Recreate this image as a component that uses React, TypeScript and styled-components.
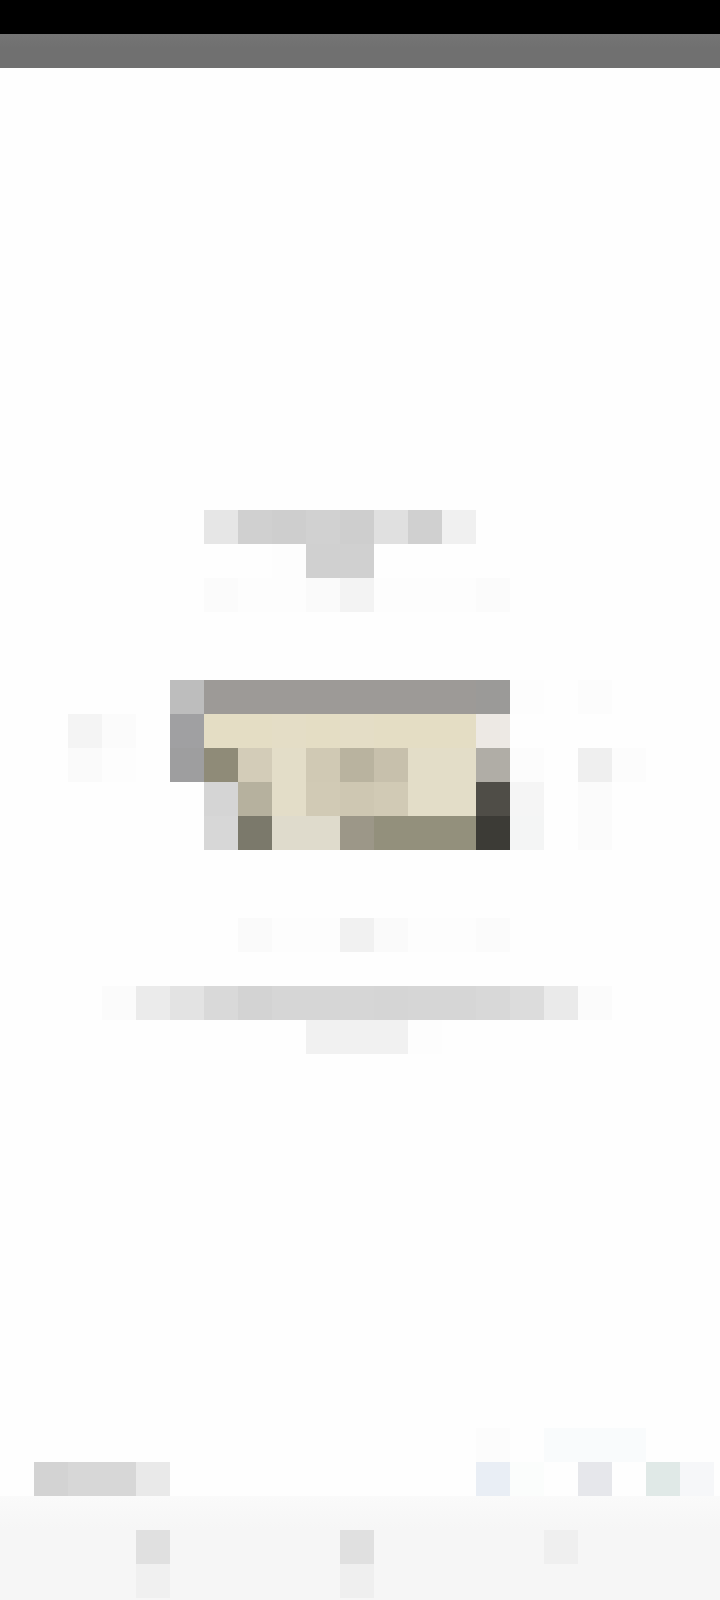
import React from 'react';
import styled, { createGlobalStyle } from 'styled-components';

const UNIT = 34;

type Tone = string | null;

const GlobalStyle = createGlobalStyle`
  html, body {
    margin: 0;
    padding: 0;
    background: #fff;
    font-family: "Roboto", "Liberation Sans", sans-serif;
  }
`;

const Screen = styled.div`
  width: 720px;
  height: 1600px;
  display: flex;
  flex-direction: column;
  overflow: hidden;
  background: #fefefe;
`;

const StatusBar = styled.div`
  height: ${UNIT}px;
  flex: none;
  background: #000;
`;

const AppBar = styled.header`
  height: ${UNIT}px;
  flex: none;
  background: linear-gradient(180deg, #757575 0%, #707070 40%, #707070 100%);
`;

const Main = styled.main`
  flex: 1;
  display: flex;
  flex-direction: column;
  padding-top: ${UNIT * 13}px;
`;

const Block = styled.section<{ $gap?: number }>`
  display: flex;
  flex-direction: column;
  margin-top: ${(p) => (p.$gap ?? 0) * UNIT}px;
`;

const Row = styled.div<{ $indent?: number }>`
  display: flex;
  height: ${UNIT}px;
  padding-left: ${(p) => (p.$indent ?? 0) * UNIT}px;
`;

const Tile = styled.span<{ $tone: Tone }>`
  flex: none;
  width: ${UNIT}px;
  height: ${UNIT}px;
  background: ${(p) => p.$tone ?? 'transparent'};
`;

const Figure = styled.div`
  display: flex;
  align-items: flex-start;
`;

const Noise = styled.div<{ $indent?: number }>`
  display: flex;
  flex-direction: column;
  flex: none;
  padding-left: ${(p) => (p.$indent ?? 0) * UNIT}px;
`;

const Picture = styled.svg`
  display: block;
  flex: none;
  width: ${UNIT * 10}px;
  height: ${UNIT * 5}px;
`;

const FooterBand = styled.div`
  margin-top: auto;
  display: flex;
  flex-direction: column;
`;

const Nav = styled.nav`
  height: 104px;
  flex: none;
  box-sizing: border-box;
  padding-top: ${UNIT}px;
  background: linear-gradient(180deg, #fafafa 0%, #f6f6f6 32%, #f6f6f6 100%);
`;

const Tiles = ({ tones, indent }: { tones: Tone[]; indent?: number }) => (
  <Row $indent={indent}>
    {tones.map((tone, i) => (
      <Tile key={i} $tone={tone} />
    ))}
  </Row>
);

const illustration: Tone[][] = [
  ['#bdbdbd', '#9d9a97', '#9d9a97', '#9d9a97', '#9d9a97', '#9d9a97', '#9d9a97', '#9d9a97', '#9d9a97', '#9b9a98'],
  ['#a0a0a2', '#e4ddc4', '#e4ddc4', '#e4ddc6', '#e4ddc4', '#e4ddc6', '#e4ddc4', '#e4ddc4', '#e4ddc4', '#ede9e4'],
  ['#9e9e9f', '#8f8b78', '#d3ccb8', '#e3ddc8', '#d0c9b4', '#b9b39f', '#c7c0ac', '#e3ddc8', '#e3ddc8', '#b0ada6'],
  [null, '#d5d5d5', '#b6b19e', '#e3ddc8', '#d1cab5', '#cec7b2', '#d1cab5', '#e3ddc8', '#e3ddc8', '#4f4d47'],
  [null, '#d7d7d7', '#7b796b', '#dfdbcc', '#dfdbcc', '#9c9788', '#93907c', '#93907c', '#93907c', '#3c3b36'],
];

const App = () => {
  return (
    <Screen>
      <GlobalStyle />
      <StatusBar />
      <AppBar />
      <Main>
        <Block>
          <Tiles indent={6} tones={['#e6e6e6', '#d0d0d0', '#cecece', '#d1d1d1', '#cecece', '#e0e0e0', '#d0d0d0', '#f0f0f0']} />
          <Tiles indent={8} tones={['#fdfdfd', '#d0d0d0', '#d0d0d0']} />
          <Tiles indent={6} tones={['#fbfbfb', '#fdfdfd', '#fdfdfd', '#fafafa', '#f3f3f3', '#fdfdfd', '#fdfdfd', '#fdfdfd', '#fbfbfb']} />
        </Block>

        <Block $gap={2}>
          <Figure>
            <Noise $indent={2}>
              <Tiles tones={['#fefefe', null, null]} />
              <Tiles tones={['#f4f4f4', '#fbfbfb', null]} />
              <Tiles tones={['#fafafa', '#fdfdfd', null]} />
            </Noise>
            <Picture viewBox="0 0 10 5" shapeRendering="crispEdges">
              {illustration.map((cells, y) =>
                cells.map((fill, x) => (fill ? <rect key={`${x}-${y}`} x={x} y={y} width="1" height="1" fill={fill} /> : null)),
              )}
            </Picture>
            <Noise>
              <Tiles tones={['#fdfdfd', null, '#fcfcfc']} />
              <Tiles tones={['#fefefe', null, '#fefefe']} />
              <Tiles tones={['#fcfcfc', null, '#efefef', '#fcfcfc']} />
              <Tiles tones={['#f5f5f5', null, '#fbfbfb', '#fefefe']} />
              <Tiles tones={['#f4f5f5', null, '#fbfbfb']} />
            </Noise>
          </Figure>
        </Block>

        <Block $gap={2}>
          <Tiles indent={7} tones={['#fafafa', '#fdfdfd', '#fdfdfd', '#f1f1f1', '#fafafa', '#fdfdfd', '#fdfdfd', '#fbfbfb']} />
        </Block>

        <Block $gap={1}>
          <Tiles
            indent={3}
            tones={['#fbfbfb', '#ebebeb', '#e3e3e3', '#d9d9d9', '#d3d3d3', '#d6d6d6', '#d6d6d6', '#d6d6d6', '#d5d5d5', '#d6d6d6', '#d6d6d6', '#d8d8d8', '#dcdcdc', '#eaeaea', '#fbfbfb']}
          />
          <Tiles indent={9} tones={['#f1f1f1', '#f1f1f1', '#f1f1f1', '#fdfdfd']} />
        </Block>

        <FooterBand>
          <Tiles indent={14} tones={['#fcfcfc', null, '#f9fbfc', '#f9fbfc', '#f9fbfc']} />
          <Row $indent={1}>
            {['#d3d3d3', '#d7d7d7', '#d7d7d7', '#e9e9e9', null, null, null, null, null, null, null, null, null, '#e9eef5', '#fbfdfc', null, '#e6e7eb', null, '#e0e9e7', '#f6f7f9'].map((tone, i) => (
              <Tile key={i} $tone={tone} />
            ))}
          </Row>
        </FooterBand>
      </Main>
      <Nav>
        <Tiles indent={4} tones={['#e0e0e0', null, null, null, null, null, '#e0e0e0', null, null, null, null, null, '#efefef']} />
        <Tiles indent={4} tones={['#f0f0f0', null, null, null, null, null, '#efefef']} />
      </Nav>
    </Screen>
  );
};

export default App;
